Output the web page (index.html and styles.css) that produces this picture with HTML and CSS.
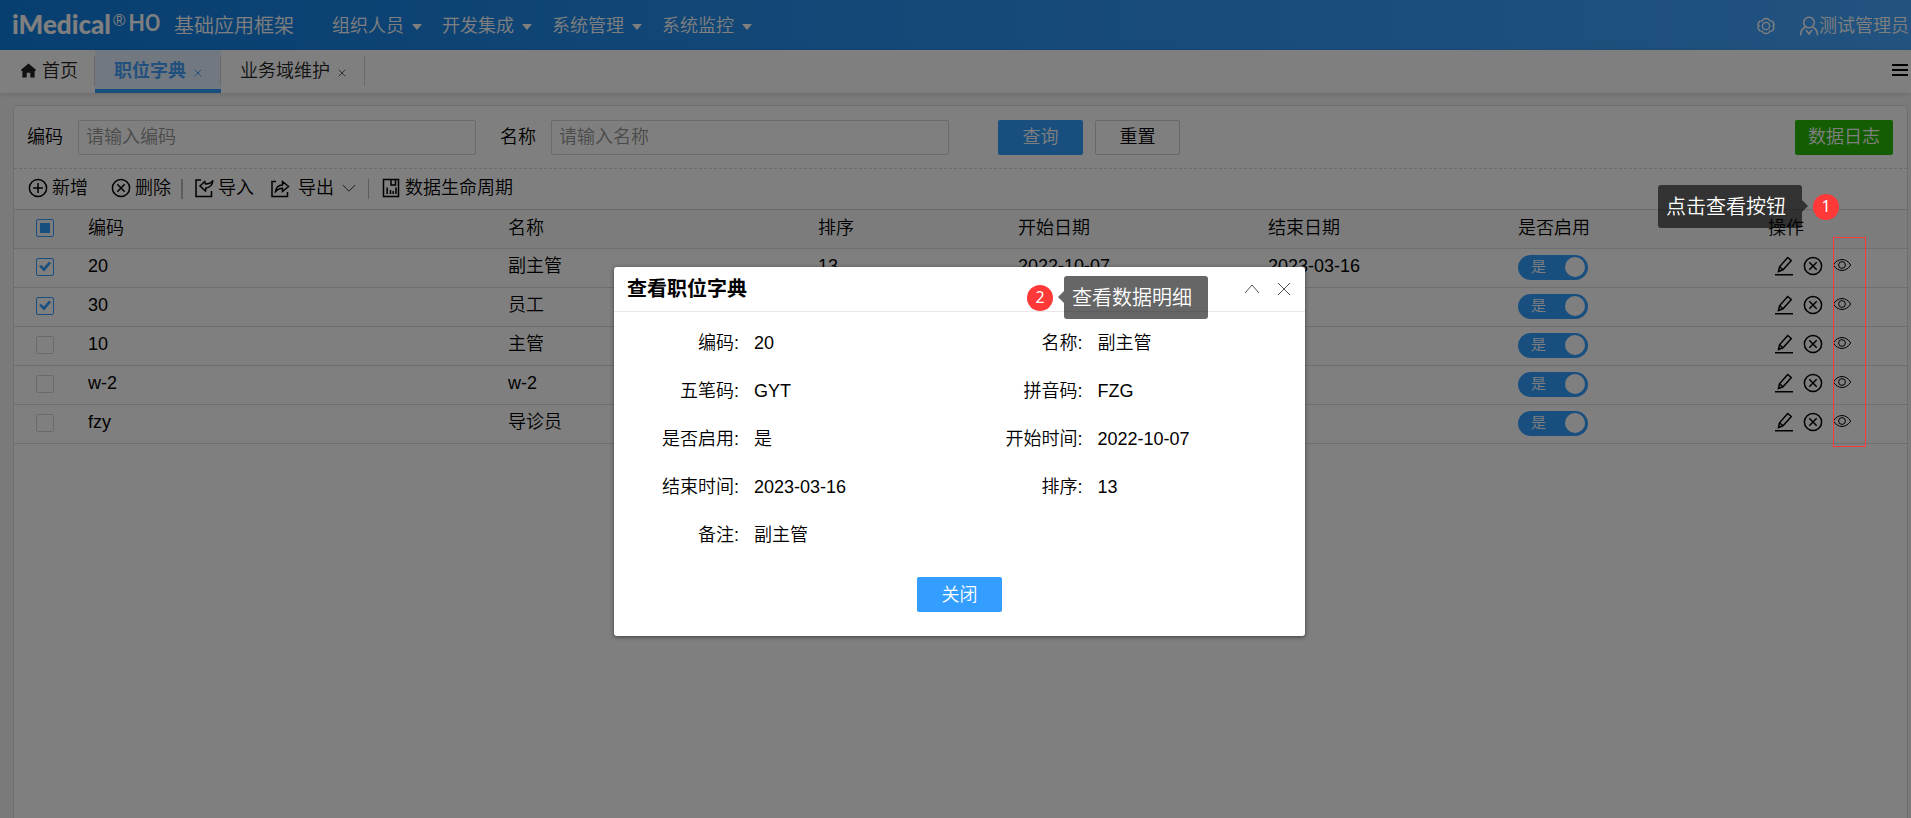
FILE: index.html
```html
<!DOCTYPE html>
<html lang="zh-CN">
<head>
<meta charset="utf-8">
<title>职位字典</title>
<link rel="stylesheet" href="styles.css">
</head>
<body>
<svg class="sprite" aria-hidden="true">
  <symbol id="plus" viewBox="0 0 20 20"><circle cx="10" cy="10" r="8.6"/><path d="M10 5v10M5 10h10"/></symbol>
  <symbol id="remove" viewBox="0 0 20 20"><circle cx="10" cy="10" r="8.6"/><path d="M6.3 6.3l7.4 7.4M13.7 6.3l-7.4 7.4"/></symbol>
  <symbol id="import" viewBox="0 0 20 20"><path d="M7 2H2v16.500h15.500V13"/><path d="M19 2.500c-2 2.800-4.500 3.500-7.500 3.500l-.8-2.500L6 8l5.500 5 .5-3c4-.5 6.500-3.500 7-7.500z"/></symbol>
  <symbol id="export" viewBox="0 0 20 20"><path d="M6 3.500H2v15h15.500V14"/><path d="M5.500 13.500c.5-4 3-6.300 7-6.500V3.500l6 5-6 5v-3.300c-3 0-5 1-7 3.300z"/></symbol>
  <symbol id="archive" viewBox="0 0 20 20"><path d="M2.500 1.500h15v17h-15zM6.200 16V9.500M9.500 16v-4M12.200 16v-3M15 16V9.500M10 1.500v5.500h4.500V1.500"/></symbol>
  <symbol id="down" viewBox="0 0 14 14"><path d="M.8 4l6.200 6.200L13.200 4"/></symbol>
  <symbol id="edit" viewBox="0 0 20 20"><path d="M1 18.800h18M4.500 15.500l1-4.700L13.700 1.500l3.600 3L9 13.800zM5.500 10.800L9 13.800"/></symbol>
  <symbol id="eye" viewBox="0 0 20 20"><path d="M1.300 9c4.500-7.300 12.900-7.300 17.400 0-4.500 7.300-12.900 7.300-17.400 0z"/><circle cx="10" cy="9" r="3.400"/></symbol>
</svg>

<header class="topbar">
  <div class="logo"><span class="logo-name">iMedical</span><span class="logo-reg">®</span><span class="logo-ho">HO</span></div>
  <div class="product">基础应用框架</div>
  <nav class="menu">
    <button type="button">组织人员<i class="caret"></i></button>
    <button type="button">开发集成<i class="caret"></i></button>
    <button type="button">系统管理<i class="caret"></i></button>
    <button type="button">系统监控<i class="caret"></i></button>
  </nav>
  <div class="account">
    <button type="button" aria-label="设置"><svg class="icon gear" viewBox="0 0 20 20"><path d="M7 2.500Q10 .8 13 2.500L14.200 4.300 16.800 4.500Q18.800 6.500 19 9L17.600 10 19 11.500Q18.500 14 16.800 15.500L14.200 15.700 13 17.500Q10 19.200 7 17.500L5.800 15.700 3.200 15.500Q1.500 14 1 11.500L2.400 10 1 9Q1.200 6.500 3.200 4.500L5.800 4.300z"/><circle cx="10" cy="10" r="4"/></svg></button>
    <button type="button" class="user"><svg class="icon" viewBox="0 0 20 20"><circle cx="10" cy="6.500" r="5.300"/><path d="M6.500 11C3 12.500 1.500 15.500 1.500 19.500M13.500 11c3.500 1.500 5 4.500 5 8.500M7 14l3 4 3-4"/></svg>测试管理员</button>
  </div>
</header>

<div class="tabs">
  <button type="button" class="tab home"><svg class="home-icon" viewBox="0 0 14 14"><path d="M7 .5L.3 6v1.500h1V13.500h4V9h3.400v4.500h4v-6h1V6z"/></svg>首页</button>
  <button type="button" class="tab active">职位字典<svg class="tab-close" viewBox="0 0 8 8"><path d="M.7.7l6.600 6.600M7.300.7L.7 7.300"/></svg></button>
  <button type="button" class="tab">业务域维护<svg class="tab-close" viewBox="0 0 8 8"><path d="M.7.7l6.600 6.600M7.300.7L.7 7.300"/></svg></button>
  <button type="button" class="burger" aria-label="标签菜单"><i></i><i></i><i></i></button>
</div>

<main class="panel">
  <form class="search">
    <label for="code">编码</label><input id="code" type="text" placeholder="请输入编码">
    <label for="name" class="second">名称</label><input id="name" type="text" placeholder="请输入名称">
    <button type="button" class="btn primary first">查询</button>
    <button type="button" class="btn plain">重置</button>
    <button type="button" class="btn green">数据日志</button>
  </form>
  <div class="toolbar">
    <button type="button"><svg class="icon"><use href="#plus"/></svg>新增</button>
    <button type="button"><svg class="icon"><use href="#remove"/></svg>删除</button>
    <i class="divider thick"></i>
    <button type="button"><svg class="icon"><use href="#import"/></svg>导入</button>
    <button type="button" class="export"><svg class="icon"><use href="#export"/></svg>导出<svg class="chevron"><use href="#down"/></svg></button>
    <i class="divider"></i>
    <button type="button"><svg class="icon"><use href="#archive"/></svg>数据生命周期</button>
  </div>
  <table class="grid">
    <colgroup><col class="c-check"><col class="c-code"><col class="c-name"><col class="c-sort"><col class="c-date"><col class="c-date"><col class="c-date"><col></colgroup>
    <thead>
      <tr><th class="check"><input type="checkbox" class="box some" aria-label="全选"></th><th>编码</th><th>名称</th><th>排序</th><th>开始日期</th><th>结束日期</th><th>是否启用</th><th>操作</th></tr>
    </thead>
    <tbody>
      <tr><td class="check"><input type="checkbox" class="box" aria-label="选择 20" checked></td><td>20</td><td>副主管</td><td>13</td><td>2022-10-07</td><td>2023-03-16</td>
        <td><label class="switch"><input type="checkbox" checked><span>是</span></label></td>
        <td><div class="ops"><button type="button" aria-label="修改"><svg class="icon"><use href="#edit"/></svg></button><button type="button" aria-label="删除"><svg class="icon"><use href="#remove"/></svg></button><button type="button" aria-label="查看"><svg class="icon thin"><use href="#eye"/></svg></button></div></td></tr>
      <tr><td class="check"><input type="checkbox" class="box" aria-label="选择 30" checked></td><td>30</td><td>员工</td><td></td><td></td><td></td>
        <td><label class="switch"><input type="checkbox" checked><span>是</span></label></td>
        <td><div class="ops"><button type="button" aria-label="修改"><svg class="icon"><use href="#edit"/></svg></button><button type="button" aria-label="删除"><svg class="icon"><use href="#remove"/></svg></button><button type="button" aria-label="查看"><svg class="icon thin"><use href="#eye"/></svg></button></div></td></tr>
      <tr><td class="check"><input type="checkbox" class="box" aria-label="选择 10"></td><td>10</td><td>主管</td><td></td><td></td><td></td>
        <td><label class="switch"><input type="checkbox" checked><span>是</span></label></td>
        <td><div class="ops"><button type="button" aria-label="修改"><svg class="icon"><use href="#edit"/></svg></button><button type="button" aria-label="删除"><svg class="icon"><use href="#remove"/></svg></button><button type="button" aria-label="查看"><svg class="icon thin"><use href="#eye"/></svg></button></div></td></tr>
      <tr><td class="check"><input type="checkbox" class="box" aria-label="选择 w-2"></td><td>w-2</td><td>w-2</td><td></td><td></td><td></td>
        <td><label class="switch"><input type="checkbox" checked><span>是</span></label></td>
        <td><div class="ops"><button type="button" aria-label="修改"><svg class="icon"><use href="#edit"/></svg></button><button type="button" aria-label="删除"><svg class="icon"><use href="#remove"/></svg></button><button type="button" aria-label="查看"><svg class="icon thin"><use href="#eye"/></svg></button></div></td></tr>
      <tr><td class="check"><input type="checkbox" class="box" aria-label="选择 fzy"></td><td>fzy</td><td>导诊员</td><td></td><td></td><td></td>
        <td><label class="switch"><input type="checkbox" checked><span>是</span></label></td>
        <td><div class="ops"><button type="button" aria-label="修改"><svg class="icon"><use href="#edit"/></svg></button><button type="button" aria-label="删除"><svg class="icon"><use href="#remove"/></svg></button><button type="button" aria-label="查看"><svg class="icon thin"><use href="#eye"/></svg></button></div></td></tr>
    </tbody>
  </table>
</main>

<div class="mask"></div>

<section class="dialog" role="dialog" aria-labelledby="dialog-title">
  <div class="dialog-head">
    <h2 id="dialog-title">查看职位字典</h2>
    <button type="button" aria-label="折叠"><svg class="head-icon" viewBox="0 0 16 16"><path d="M1 12l7-8 7 8"/></svg></button>
    <button type="button" aria-label="关闭窗口"><svg class="head-icon" viewBox="0 0 16 16"><path d="M2 2l12 12M14 2L2 14"/></svg></button>
  </div>
  <dl class="detail">
    <div><dt>编码:</dt><dd>20</dd></div><div><dt>名称:</dt><dd>副主管</dd></div>
    <div><dt>五笔码:</dt><dd>GYT</dd></div><div><dt>拼音码:</dt><dd>FZG</dd></div>
    <div><dt>是否启用:</dt><dd>是</dd></div><div><dt>开始时间:</dt><dd>2022-10-07</dd></div>
    <div><dt>结束时间:</dt><dd>2023-03-16</dd></div><div><dt>排序:</dt><dd>13</dd></div>
    <div><dt>备注:</dt><dd>副主管</dd></div>
  </dl>
  <div class="dialog-foot"><button type="button" class="btn primary">关闭</button></div>
</section>

<div class="outline"></div>
<div class="note note-one"><span class="tip tip-left">点击查看按钮</span><span class="num">1</span></div>
<div class="note note-two"><span class="num">2</span><span class="tip tip-right">查看数据明细</span></div>
</body>
</html>
```
FILE: styles.css
```css
* { box-sizing: border-box; }
body {
  margin: 0;
  height: 100vh;
  display: flex;
  flex-direction: column;
  overflow: hidden;
  position: relative;
  background: #f5f5f5;
  color: #000;
  font: 18px/24px "Liberation Sans", "Noto Sans CJK SC", sans-serif;
  font-weight: 350;
}
button, input {
  font: inherit;
  color: inherit;
}
button {
  border: 0;
  padding: 0;
  background: none;
  white-space: nowrap;
}
svg { fill: none; stroke: currentColor; }
.sprite { position: absolute; width: 0; height: 0; }
.icon { width: 20px; height: 20px; flex: none; stroke-width: 1.5; }
.thin { stroke-width: 1; }

/* top bar */
.topbar {
  height: 50px;
  flex: none;
  display: flex;
  align-items: center;
  padding: 1px 2px 0 12px;
  color: #fff;
  background: linear-gradient(90deg, #107fe2, #45a6ff);
}
.logo { display: flex; align-items: center; width: 162px; margin-bottom: 4px; }
.logo-name { font: 900 26px/30px Lato, sans-serif; }
.logo-reg { font-size: 17px; margin: 0 3px 6px 2px; }
.logo-ho { font: 500 23px/30px Roboto, sans-serif; }
.product { font-size: 20px; margin-right: 38px; }
.menu { display: flex; }
.menu button { width: 110px; display: flex; align-items: center; gap: 8px; }
.caret { border: 5px solid transparent; border-top: 6px solid #fff; border-bottom: 0; margin-top: 2px; }
.account { margin-left: auto; display: flex; align-items: center; gap: 24px; }
.account button { display: flex; align-items: center; }
.gear { width: 18px; height: 18px; }
.user { gap: 0; }

/* page tabs */
.tabs {
  height: 43px;
  flex: none;
  display: flex;
  background: #fff;
  box-shadow: 0 1px 5px rgba(0, 0, 0, .14);
}
.tab {
  display: flex;
  align-items: center;
  padding: 2px 17px 0 19px;
  position: relative;
  border-bottom: 4px solid transparent;
  color: #222;
}
.tab::after {
  content: "";
  position: absolute;
  right: 0;
  top: 6px;
  height: 30px;
  border-right: 1px solid #d4d4d4;
}
.tab.home { padding: 2px 17px 0 21px; gap: 6px; }
.home-icon { width: 15px; height: 15px; fill: #222; stroke: none; }
.tab.active { background: #e3f1ff; border-color: #339eff; color: #45a0fc; font-weight: 700; }
.tab-close { width: 8px; height: 8px; margin: 5px 2px 0 8px; color: #666; }
.active .tab-close { color: #45a0fc; }
.burger { margin: 14px 3px auto auto; width: 16px; display: flex; flex-direction: column; gap: 3px; }
.burger i { height: 2px; background: #000; }

/* content */
.panel {
  flex: 1;
  margin: 12px 3px 0 13px;
  border: 1px solid #ddd;
  border-bottom: 0;
  border-radius: 5px 5px 0 0;
  background: #fff;
}
.search {
  height: 63px;
  display: flex;
  align-items: center;
  padding: 0 14px 0 13px;
  border-bottom: 1px dashed #d8d8d8;
}
.search label { margin-right: 15px; white-space: nowrap; }
.search .second { margin-left: 24px; }
.search input {
  flex: 0 1 398px;
  min-width: 80px;
  height: 35px;
  border: 1px solid #d6d6d6;
  border-radius: 2px;
  padding: 0 7px;
}
.search input::placeholder { color: #969696; opacity: 1; }
.btn { min-width: 85px; height: 35px; border-radius: 2px; padding: 0 13px; }
.primary { background: #339eff; color: #fff; }
.plain { border: 1px solid #d0d0d0; margin-left: 12px; }
.first { margin-left: 49px; }
.green { background: #28ba05; color: #fff; margin-left: auto; }
.toolbar {
  height: 41px;
  display: flex;
  align-items: center;
  padding: 0 14px;
  padding-bottom: 3px;
  border-bottom: 1px solid #d8d8d8;
}
.toolbar button { display: flex; align-items: center; gap: 4px; margin-right: 23px; }
.toolbar button:nth-child(2) { margin-right: 10px; }
.toolbar button:nth-child(4) { margin-right: 16px; }
.toolbar .export { gap: 8px; margin-right: 12px; }
.chevron { width: 14px; height: 14px; color: #333; }
.divider { height: 20px; border-left: 1px solid #bbb; margin: 2px 12px 0 0; }
.divider.thick { border-left-width: 2px; margin-right: 11px; }

.grid { width: 100%; table-layout: fixed; border-collapse: collapse; }
.c-check { width: 64px; }
.c-code { width: 420px; }
.c-name { width: 310px; }
.c-sort { width: 200px; }
.c-date { width: 250px; }
.grid th, .grid td {
  height: 39px;
  padding: 0 10px 3px;
  text-align: left;
  font-weight: 350;
  border-bottom: 1px solid #ddd;
}
.grid th { height: 38px; padding-bottom: 2px; background: #f9f9f9; }
.grid .check { padding: 0 0 2px 22px; }
.box {
  appearance: none;
  display: grid;
  place-items: center;
  width: 18px;
  height: 18px;
  margin: 0;
  border: 1px solid #d4d4d4;
  border-radius: 2px;
}
.box:checked, .box.some { border-color: #339eff; }
.box.some::before { content: ""; width: 10px; height: 10px; background: #339eff; }
.box:checked::before {
  content: "";
  width: 12px;
  height: 10px;
  background: #339eff;
  clip-path: polygon(0 48%, 20% 34%, 40% 60%, 84% 0, 100% 18%, 42% 100%);
}
.switch { display: block; width: 70px; height: 25px; margin-top: 3px; position: relative; color: #fff; font-size: 15px; }
.switch input { appearance: none; position: absolute; inset: 0; margin: 0; background: #339eff; border-radius: 13px; }
.switch input::after {
  content: "";
  position: absolute;
  top: 2px;
  right: 3px;
  width: 20px;
  height: 20px;
  border-radius: 50%;
  background: #fff;
}
.switch span { position: relative; margin-left: 13px; }
.ops { display: flex; gap: 9px; padding-left: 6px; }
.ops button { display: flex; }

/* overlay layer */
.mask { position: absolute; inset: 0; background: rgba(0, 0, 0, .5); }
.dialog {
  position: absolute;
  top: 267px;
  left: 614px;
  width: 691px;
  background: #fff;
  border-radius: 3px;
  box-shadow: 0 1px 4px rgba(0, 0, 0, .5);
}
.dialog-head {
  height: 45px;
  display: flex;
  align-items: center;
  gap: 16px;
  padding: 0 13px;
  border-bottom: 1px solid #e8e8e8;
  color: #555;
}
.dialog-head button { display: flex; }
.dialog-head h2 { margin: 0 auto 0 0; font-size: 20px; font-weight: 700; color: #000; }
.head-icon { width: 16px; height: 16px; }
.detail {
  margin: 0;
  padding: 7px 2px 0;
  display: grid;
  grid-template-columns: 1fr 1fr;
  grid-auto-rows: 48px;
}
.detail div { display: flex; align-items: center; gap: 15px; }
.detail dt { width: 123px; text-align: right; }
.detail dd { margin: 0; }
.dialog-foot { display: flex; justify-content: center; padding: 18px 0 24px; }

/* callouts */
.outline { position: absolute; left: 1833px; top: 237px; width: 33px; height: 210px; border: 1px solid #fa3939; }
.note { position: absolute; display: flex; align-items: center; gap: 11px; }
.note-one { left: 1658px; top: 185px; }
.note-two { left: 1027px; top: 276px; }
.tip {
  position: relative;
  width: 144px;
  height: 43px;
  padding-left: 8px;
  border-radius: 3px;
  background: rgba(0, 0, 0, .6);
  color: #fff;
  font-size: 20px;
  line-height: 44px;
}
.tip::after { content: ""; position: absolute; top: 15px; border: 6px solid transparent; }
.tip-left::after { left: 100%; border-left-color: rgba(0, 0, 0, .6); border-right: 0; }
.tip-right::after { right: 100%; border-right-color: rgba(0, 0, 0, .6); border-left: 0; }
.num {
  width: 26px;
  height: 26px;
  border-radius: 50%;
  background: #ff3838;
  color: #fff;
  font: 16px/24px "Noto Sans", sans-serif;
  text-align: center;
}
```
